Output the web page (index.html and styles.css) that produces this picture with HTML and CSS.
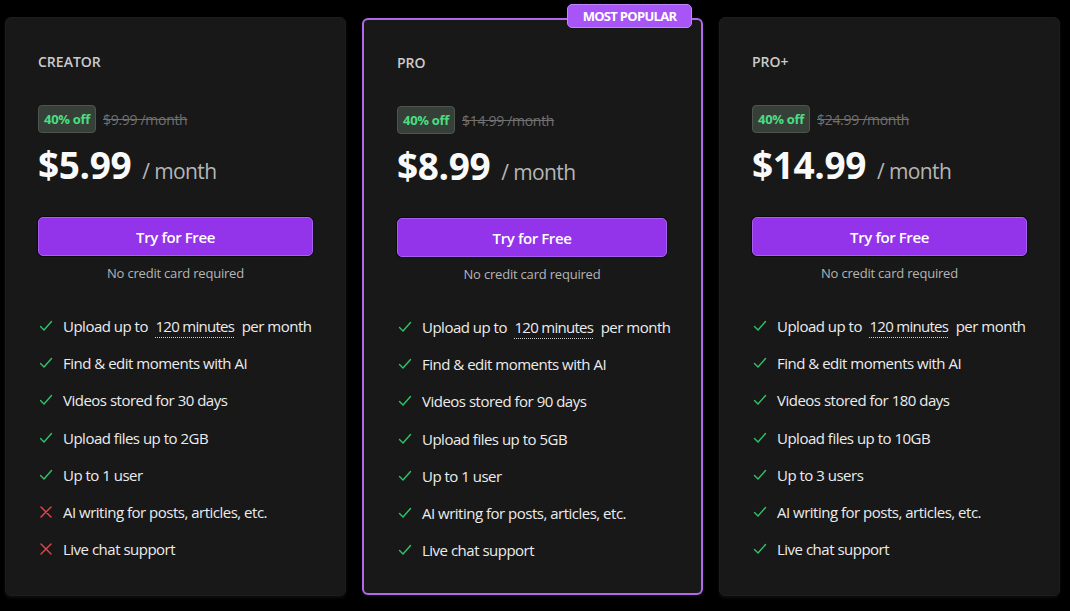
FILE: index.html
```html
<!DOCTYPE html>
<html lang="en">
<head>
<meta charset="utf-8">
<title>Pricing</title>
<link rel="stylesheet" href="styles.css">
</head>
<body>
<main class="plans">
  <section class="card">
    <h2 class="plan-name">CREATOR</h2>
    <div class="discount-row">
      <span class="discount">40% off</span>
      <span class="old-price">$9.99 /month</span>
    </div>
    <div class="price"><span class="amount">$5.99</span><span class="period">/ month</span></div>
    <button class="cta">Try for Free</button>
    <p class="note">No credit card required</p>
    <ul class="features">
      <li><svg class="ic ok" viewBox="0 0 14 12"><path d="M1.5 6.5 L5 10 L12.5 1.5"/></svg><span>Upload up to <span class="dotted">120 minutes</span> per month</span></li>
      <li><svg class="ic ok" viewBox="0 0 14 12"><path d="M1.5 6.5 L5 10 L12.5 1.5"/></svg><span>Find &amp; edit moments with AI</span></li>
      <li><svg class="ic ok" viewBox="0 0 14 12"><path d="M1.5 6.5 L5 10 L12.5 1.5"/></svg><span>Videos stored for 30 days</span></li>
      <li><svg class="ic ok" viewBox="0 0 14 12"><path d="M1.5 6.5 L5 10 L12.5 1.5"/></svg><span>Upload files up to 2GB</span></li>
      <li><svg class="ic ok" viewBox="0 0 14 12"><path d="M1.5 6.5 L5 10 L12.5 1.5"/></svg><span>Up to 1 user</span></li>
      <li><svg class="ic no" viewBox="0 0 14 12"><path d="M2 1 L12 11 M12 1 L2 11"/></svg><span>AI writing for posts, articles, etc.</span></li>
      <li><svg class="ic no" viewBox="0 0 14 12"><path d="M2 1 L12 11 M12 1 L2 11"/></svg><span>Live chat support</span></li>
    </ul>
  </section>

  <section class="card card-popular">
    <span class="popular-tag">MOST POPULAR</span>
    <h2 class="plan-name">PRO</h2>
    <div class="discount-row">
      <span class="discount">40% off</span>
      <span class="old-price">$14.99 /month</span>
    </div>
    <div class="price"><span class="amount">$8.99</span><span class="period">/ month</span></div>
    <button class="cta">Try for Free</button>
    <p class="note">No credit card required</p>
    <ul class="features">
      <li><svg class="ic ok" viewBox="0 0 14 12"><path d="M1.5 6.5 L5 10 L12.5 1.5"/></svg><span>Upload up to <span class="dotted">120 minutes</span> per month</span></li>
      <li><svg class="ic ok" viewBox="0 0 14 12"><path d="M1.5 6.5 L5 10 L12.5 1.5"/></svg><span>Find &amp; edit moments with AI</span></li>
      <li><svg class="ic ok" viewBox="0 0 14 12"><path d="M1.5 6.5 L5 10 L12.5 1.5"/></svg><span>Videos stored for 90 days</span></li>
      <li><svg class="ic ok" viewBox="0 0 14 12"><path d="M1.5 6.5 L5 10 L12.5 1.5"/></svg><span>Upload files up to 5GB</span></li>
      <li><svg class="ic ok" viewBox="0 0 14 12"><path d="M1.5 6.5 L5 10 L12.5 1.5"/></svg><span>Up to 1 user</span></li>
      <li><svg class="ic ok" viewBox="0 0 14 12"><path d="M1.5 6.5 L5 10 L12.5 1.5"/></svg><span>AI writing for posts, articles, etc.</span></li>
      <li><svg class="ic ok" viewBox="0 0 14 12"><path d="M1.5 6.5 L5 10 L12.5 1.5"/></svg><span>Live chat support</span></li>
    </ul>
  </section>

  <section class="card">
    <h2 class="plan-name">PRO+</h2>
    <div class="discount-row">
      <span class="discount">40% off</span>
      <span class="old-price">$24.99 /month</span>
    </div>
    <div class="price"><span class="amount">$14.99</span><span class="period">/ month</span></div>
    <button class="cta">Try for Free</button>
    <p class="note">No credit card required</p>
    <ul class="features">
      <li><svg class="ic ok" viewBox="0 0 14 12"><path d="M1.5 6.5 L5 10 L12.5 1.5"/></svg><span>Upload up to <span class="dotted">120 minutes</span> per month</span></li>
      <li><svg class="ic ok" viewBox="0 0 14 12"><path d="M1.5 6.5 L5 10 L12.5 1.5"/></svg><span>Find &amp; edit moments with AI</span></li>
      <li><svg class="ic ok" viewBox="0 0 14 12"><path d="M1.5 6.5 L5 10 L12.5 1.5"/></svg><span>Videos stored for 180 days</span></li>
      <li><svg class="ic ok" viewBox="0 0 14 12"><path d="M1.5 6.5 L5 10 L12.5 1.5"/></svg><span>Upload files up to 10GB</span></li>
      <li><svg class="ic ok" viewBox="0 0 14 12"><path d="M1.5 6.5 L5 10 L12.5 1.5"/></svg><span>Up to 3 users</span></li>
      <li><svg class="ic ok" viewBox="0 0 14 12"><path d="M1.5 6.5 L5 10 L12.5 1.5"/></svg><span>AI writing for posts, articles, etc.</span></li>
      <li><svg class="ic ok" viewBox="0 0 14 12"><path d="M1.5 6.5 L5 10 L12.5 1.5"/></svg><span>Live chat support</span></li>
    </ul>
  </section>
</main>
</body>
</html>
```

FILE: styles.css
```css
* { box-sizing: border-box; }

html, body {
  margin: 0;
  background: #000;
}

body {
  font-family: "Open Sans", "Noto Sans", "DejaVu Sans", sans-serif;
  color: #e6e6e6;
}

.plans {
  display: flex;
  gap: 16px;
  padding: 17px 10px 15px 5px;
  height: 611px;
}

.card {
  position: relative;
  flex: 0 0 341px;
  width: 341px;
  min-width: 0;
  height: 579px;
  background: #181818;
  border: 1px solid #1d1d1d;
  border-radius: 6px;
  padding: 34px 32px 0;
  display: flex;
  flex-direction: column;
  box-shadow: 0 2px 3px rgba(60, 60, 60, 0.25);
}

.card-popular {
  margin: 1px 0;
  height: 577px;
  border: 2px solid #b267f0;
  padding: 33px 34px 0 33px;
}

.popular-tag {
  position: absolute;
  top: -16px;
  right: 9px;
  width: 125px;
  height: 24px;
  background: #a855f7;
  border: 1px solid #c085fb;
  border-radius: 5px;
  color: #fff;
  font-weight: 700;
  font-size: 13px;
  line-height: 22px;
  text-align: center;
  letter-spacing: -0.7px;
}

.plan-name {
  margin: 0;
  font-size: 14px;
  line-height: 20px;
  font-weight: 600;
  color: #cbcbcb;
}

.discount-row {
  margin-top: 33px;
  display: flex;
  align-items: center;
  gap: 7px;
  height: 28px;
}

.discount {
  display: inline-flex;
  align-items: center;
  justify-content: center;
  height: 28px;
  padding: 0 5px;
  background: #364039;
  border: 1px solid #4a564e;
  border-radius: 4px;
  color: #4ade80;
  font-size: 13px;
  font-weight: 700;
  letter-spacing: -0.3px;
}

.old-price {
  color: #707070;
  font-size: 14px;
  text-decoration: line-through;
  letter-spacing: -0.3px;
}

.price {
  margin-top: 10px;
  height: 44px;
  display: flex;
  align-items: baseline;
  gap: 11px;
}

.amount {
  font-size: 37px;
  line-height: 44px;
  font-weight: 700;
  color: #fafafa;
  letter-spacing: -0.4px;
}

.period {
  font-size: 21px;
  color: #b5b5b5;
  letter-spacing: -0.6px;
}

.cta {
  margin-top: 30px;
  height: 39px;
  width: 100%;
  background: #9333ea;
  border: 1px solid #a95df2;
  border-radius: 5px;
  box-shadow: 0 0 0 1px #0c0c0c;
  color: #fff;
  font-family: inherit;
  font-size: 15px;
  font-weight: 600;
  letter-spacing: -0.4px;
  cursor: pointer;
}

.note {
  margin: 8px 0 0;
  text-align: center;
  font-size: 13px;
  line-height: 18px;
  color: #b5b5b5;
  letter-spacing: -0.2px;
}

.features {
  list-style: none;
  margin: 25px 0 0;
  padding: 0;
  min-width: 0;
}

.features li {
  display: flex;
  align-items: center;
  height: 37.3px;
  font-size: 15px;
  color: #ececec;
  letter-spacing: -0.5px;
  white-space: nowrap;
}

.ic {
  flex: 0 0 14px;
  width: 14px;
  height: 12px;
  margin: 0 10px 0 1px;
  fill: none;
  stroke-width: 1.4;
  stroke-linecap: round;
  stroke-linejoin: round;
}

.ic.ok { stroke: #2fc46a; }
.ic.no { stroke: #e5484d; }

.dotted {
  margin: 0 4px;
  border-bottom: 1px dotted #cfcfcf;
  padding-bottom: 1px;
  letter-spacing: -0.7px;
}
```
